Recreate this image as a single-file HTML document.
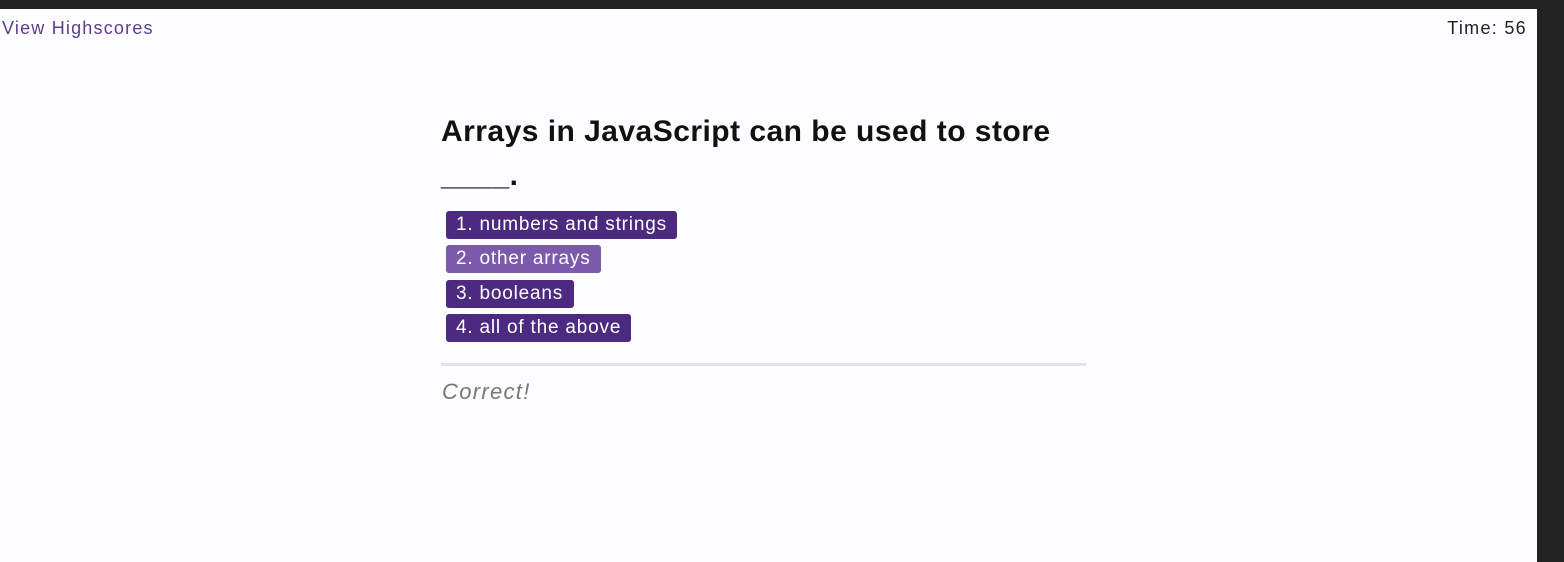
<!DOCTYPE html>
<html><head><style>
body{margin:0;width:1564px;height:562px;background:#222;position:relative;overflow:hidden;font-family:"Liberation Sans",sans-serif}
.page{position:absolute;left:0;top:9px;width:1537px;height:553px;background:#fdfcfe}
.hs{position:absolute;left:2px;top:9px;font-size:18px;color:#5b3d8c;letter-spacing:1.2px}
.tm{position:absolute;right:10px;top:9px;font-size:18px;color:#222;letter-spacing:1.3px}
h1{position:absolute;left:441px;top:101px;margin:0;font-size:30px;font-weight:bold;color:#111;line-height:44px;width:625px;letter-spacing:0.47px}
.b{position:absolute;left:446px;height:28px;line-height:28px;border-radius:3px;background:#4b2a80;color:#fff;font-size:19px;padding:0 10px;letter-spacing:0.8px;box-sizing:border-box;white-space:nowrap;overflow:hidden}
hr{position:absolute;left:441px;top:354px;width:645px;margin:0;border:0;border-top:3px solid #e4e2e6}
.c{position:absolute;left:442px;top:370px;font-style:italic;color:#777;font-size:22px;letter-spacing:1.3px}
</style></head><body>
<div class="page">
<div class="hs">View Highscores</div>
<div class="tm">Time: 56</div>
<h1>Arrays in JavaScript can be used to store ____.</h1>
<div class="b" style="top:202px;width:231px">1. numbers and strings</div>
<div class="b" style="top:236px;width:155px;background:#7a5aa9">2. other arrays</div>
<div class="b" style="top:271px;width:128px">3. booleans</div>
<div class="b" style="top:305px;width:185px">4. all of the above</div>
<hr>
<div class="c">Correct!</div>
</div>
</body></html>
